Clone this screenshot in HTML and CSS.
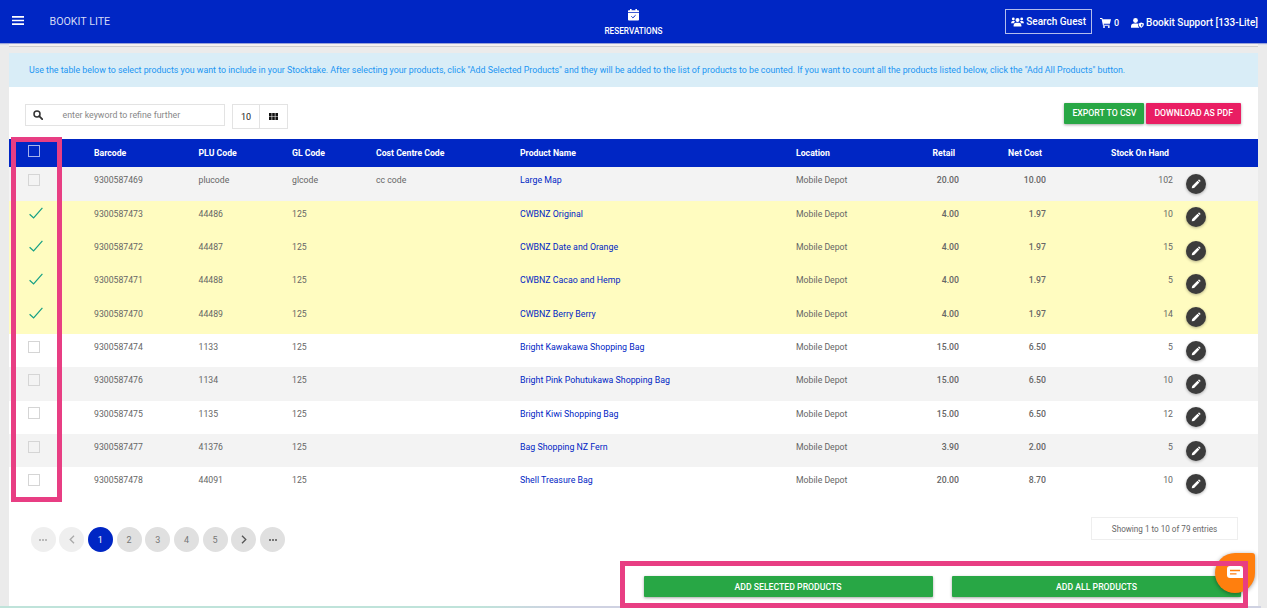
FILE: index.html
```
<!doctype html>
<html lang="en">
<head>
    <meta charset="UTF-8">
    <meta name="viewport" content="width=device-width, initial-scale=1.0">
    <title>Bookit Lite - Stocktake</title>
    <link rel="stylesheet" href="styles.css">
</head>
<body>
    <svg class="sprite">
        <symbol id="pencil" viewBox="0 0 12 12"><path d="M1.700 10.300l.5-2.300 5.300-5.300 1.900 1.900L4.100 9.900zM7.900 2.300l.6-.6q.5-.4 1 0l.8.8q.5.5 0 1l-.6.6z" fill="#fff"/></symbol>
        <symbol id="tick" viewBox="0 0 14 12"><path d="M.6 7.200l4 3.800L13.400.8" fill="none" stroke="#16a085" stroke-width="1.200"/></symbol>
    </svg>

    <div class="header">
        <div class="header-left">
            <svg class="burger" width="12" height="9" viewBox="0 0 12 9"><path d="M0 .9h12M0 4.500h12M0 8.100h12" stroke="#fff" stroke-width="1.600"/></svg>
            <div class="brand">BOOKIT LITE</div>
        </div>
        <div class="header-nav">
            <svg width="11" height="12" viewBox="0 0 11 12"><path d="M2 0h1.600v1.300h3.800V0H9v1.300h1.200q.8 0 .8.800v1.200H0V2.100q0-.8.8-.8H2z" fill="#fff"/><path d="M0 4h11v6.500q0 .9-.9.900H.9q-.9 0-.9-.9z" fill="#fff"/><path d="M3.400 7.300l1.500 1.500 2.700-2.600" fill="none" stroke="#0026c4" stroke-width="1"/></svg>
            <span>RESERVATIONS</span>
        </div>
        <div class="header-right">
            <div class="guest">
                <svg width="13" height="10" viewBox="0 0 13 10"><g fill="#fff"><circle cx="2.300" cy="1.900" r="1.400"/><circle cx="10.700" cy="1.900" r="1.400"/><circle cx="6.500" cy="3" r="2"/><path d="M0 6.300q0-2.500 2.300-2.500 1.200 0 1.700.8-.8.700-1 1.700zM13 6.300q0-2.500-2.300-2.500-1.200 0-1.700.8.8.700 1 1.700zM2.600 9.500V8.300q0-2.500 2.300-2.500h3.200q2.300 0 2.300 2.500v1.200z"/></g></svg>
                <span>Search Guest</span>
            </div>
            <div class="cart">
                <svg width="11" height="10" viewBox="0 0 11 10"><path d="M0 0h2.300l.3 1.200H11L9.900 5.800H3.700l.2.900h5.700v1H3L1.600 1H0z" fill="#fff"/><circle cx="4" cy="8.900" r="1" fill="#fff"/><circle cx="8.800" cy="8.900" r="1" fill="#fff"/></svg>
                <span>0</span>
            </div>
            <div class="user">
                <svg width="13" height="10" viewBox="0 0 13 10"><g fill="#fff"><circle cx="4.500" cy="2.500" r="2.400"/><path d="M0 9.800V8.500q0-3 3-3h2.900q.7 0 1.200.3-.5 2.300 1.300 4z"/><path d="M10.200 4.600l2.700 1q.2 3.200-2.700 4.400-2.900-1.200-2.700-4.400z"/></g><path d="M10.200 6v2.700q1.300-.8 1.400-2.200z" fill="#0026c4"/></svg>
                <span>Bookit Support [133-Lite]</span>
            </div>
        </div>
    </div>

    <div class="strip"></div>

    <div class="main">
        <div class="info"><span>Use the table below to select products you want to include in your Stocktake. After selecting your products, click "Add Selected Products" and they will be added to the list of products to be counted. If you want to count all the products listed below, click the "Add All Products" button.</span></div>

        <div class="toolbar">
            <div class="search">
                <svg width="10" height="10" viewBox="0 0 10 10"><circle cx="4" cy="4" r="3" fill="none" stroke="#333" stroke-width="1.500"/><path d="M6.200 6.200l3 3" stroke="#333" stroke-width="1.800" stroke-linecap="round"/></svg>
                <span>enter keyword to refine further</span>
            </div>
            <div class="view">
                <div class="view-count">10</div>
                <div class="view-grid"><svg width="9" height="7" viewBox="0 0 9 7"><path d="M0 0h2.600v3.200H0zM3.200 0h2.600v3.200H3.200zM6.400 0H9v3.200H6.400zM0 3.800h2.600V7H0zM3.200 3.800h2.600V7H3.200zM6.400 3.800H9V7H6.400z" fill="#111"/></svg></div>
            </div>
            <div class="export">
                <div class="btn green">EXPORT TO CSV</div>
                <div class="btn pink">DOWNLOAD AS PDF</div>
            </div>
        </div>

        <div class="table">
            <div class="row head">
                <div class="check"><i class="box"></i></div><div>Barcode</div><div>PLU Code</div><div>GL Code</div><div>Cost Centre Code</div><div>Product Name</div><div>Location</div><div class="num">Retail</div><div class="num">Net Cost</div><div class="num">Stock On Hand</div><div></div>
            </div>
            <div class="row odd">
                <div class="check"><i class="box"></i></div><div>9300587469</div><div>plucode</div><div>glcode</div><div>cc code</div><div class="name">Large Map</div><div class="loc">Mobile Depot</div><div class="num price">20.00</div><div class="num price">10.00</div><div class="num">102</div><div class="edit"><svg><use href="#pencil"/></svg></div>
            </div>
            <div class="row selected">
                <div class="check"><svg><use href="#tick"/></svg></div><div>9300587473</div><div>44486</div><div>125</div><div></div><div class="name">CWBNZ Original</div><div class="loc">Mobile Depot</div><div class="num price">4.00</div><div class="num price">1.97</div><div class="num">10</div><div class="edit"><svg><use href="#pencil"/></svg></div>
            </div>
            <div class="row selected">
                <div class="check"><svg><use href="#tick"/></svg></div><div>9300587472</div><div>44487</div><div>125</div><div></div><div class="name">CWBNZ Date and Orange</div><div class="loc">Mobile Depot</div><div class="num price">4.00</div><div class="num price">1.97</div><div class="num">15</div><div class="edit"><svg><use href="#pencil"/></svg></div>
            </div>
            <div class="row selected">
                <div class="check"><svg><use href="#tick"/></svg></div><div>9300587471</div><div>44488</div><div>125</div><div></div><div class="name">CWBNZ Cacao and Hemp</div><div class="loc">Mobile Depot</div><div class="num price">4.00</div><div class="num price">1.97</div><div class="num">5</div><div class="edit"><svg><use href="#pencil"/></svg></div>
            </div>
            <div class="row selected">
                <div class="check"><svg><use href="#tick"/></svg></div><div>9300587470</div><div>44489</div><div>125</div><div></div><div class="name">CWBNZ Berry Berry</div><div class="loc">Mobile Depot</div><div class="num price">4.00</div><div class="num price">1.97</div><div class="num">14</div><div class="edit"><svg><use href="#pencil"/></svg></div>
            </div>
            <div class="row">
                <div class="check"><i class="box"></i></div><div>9300587474</div><div>1133</div><div>125</div><div></div><div class="name">Bright Kawakawa Shopping Bag</div><div class="loc">Mobile Depot</div><div class="num price">15.00</div><div class="num price">6.50</div><div class="num">5</div><div class="edit"><svg><use href="#pencil"/></svg></div>
            </div>
            <div class="row odd">
                <div class="check"><i class="box"></i></div><div>9300587476</div><div>1134</div><div>125</div><div></div><div class="name">Bright Pink Pohutukawa Shopping Bag</div><div class="loc">Mobile Depot</div><div class="num price">15.00</div><div class="num price">6.50</div><div class="num">10</div><div class="edit"><svg><use href="#pencil"/></svg></div>
            </div>
            <div class="row">
                <div class="check"><i class="box"></i></div><div>9300587475</div><div>1135</div><div>125</div><div></div><div class="name">Bright Kiwi Shopping Bag</div><div class="loc">Mobile Depot</div><div class="num price">15.00</div><div class="num price">6.50</div><div class="num">12</div><div class="edit"><svg><use href="#pencil"/></svg></div>
            </div>
            <div class="row odd">
                <div class="check"><i class="box"></i></div><div>9300587477</div><div>41376</div><div>125</div><div></div><div class="name">Bag Shopping NZ Fern</div><div class="loc">Mobile Depot</div><div class="num price">3.90</div><div class="num price">2.00</div><div class="num">5</div><div class="edit"><svg><use href="#pencil"/></svg></div>
            </div>
            <div class="row">
                <div class="check"><i class="box"></i></div><div>9300587478</div><div>44091</div><div>125</div><div></div><div class="name">Shell Treasure Bag</div><div class="loc">Mobile Depot</div><div class="num price">20.00</div><div class="num price">8.70</div><div class="num">10</div><div class="edit"><svg><use href="#pencil"/></svg></div>
            </div>
        </div>

        <div class="table-foot">
            <div class="pages">
                <div class="page disabled"><svg width="8" height="2" viewBox="0 0 8 2"><path d="M0 0h2v2H0zM3 0h2v2H3zM6 0h2v2H6z" fill="#777"/></svg></div>
                <div class="page disabled"><svg width="6" height="9" viewBox="0 0 6 9"><path d="M5 .7L1.200 4.500 5 8.300" fill="none" stroke="#555" stroke-width="1.300"/></svg></div>
                <div class="page active">1</div>
                <div class="page">2</div>
                <div class="page">3</div>
                <div class="page">4</div>
                <div class="page">5</div>
                <div class="page"><svg width="6" height="9" viewBox="0 0 6 9"><path d="M1 .7l3.800 3.800L1 8.300" fill="none" stroke="#555" stroke-width="1.300"/></svg></div>
                <div class="page"><svg width="8" height="2" viewBox="0 0 8 2"><path d="M0 0h2v2H0zM3 0h2v2H3zM6 0h2v2H6z" fill="#777"/></svg></div>
            </div>
            <div class="entries">Showing 1 to 10 of 79 entries</div>
        </div>

        <div class="actions">
            <div class="btn green">ADD SELECTED PRODUCTS</div>
            <div class="btn green">ADD ALL PRODUCTS</div>
        </div>
    </div>
    <div class="bottom-line"></div>

    <div class="chat"><svg width="16" height="14" viewBox="0 0 16 14"><path d="M3 0h10q3 0 3 3v9H3q-3 0-3-3V3q0-3 3-3z" fill="#fff"/><path d="M3 4.500h10M3 7.800h6.500" stroke="#ff7f0e" stroke-width="1.300"/></svg></div>
    <div class="mark mark-checks"></div>
    <div class="mark mark-actions"></div>
</body>
</html>
```
FILE: styles.css
```
* {
    margin: 0;
    padding: 0;
    box-sizing: border-box;
}

body {
    height: 608px;
    overflow: hidden;
    background-color: #ebebeb;
    font-family: Roboto, "Liberation Sans", sans-serif;
    font-size: 8.7px;
    color: #666;
    white-space: nowrap;
}

svg {
    display: block;
}

.sprite {
    position: absolute;
    width: 0;
    height: 0;
}

.header {
    display: grid;
    grid-template-columns: 1fr auto 1fr;
    height: 43px;
    background-color: #0026c4;
    box-shadow: 0 1px 1px #99a3d8;
    color: #fff;
}

.header-left {
    display: flex;
    align-items: center;
    padding-left: 12px;
    gap: 25.5px;
}

.burger {
    margin-bottom: 2px;
}

.brand {
    font-size: 10.7px;
    color: #d3d9f5;
}

.header-nav {
    display: flex;
    flex-direction: column;
    align-items: center;
    gap: 4.5px;
    padding-top: 9px;
    font-size: 8.2px;
    font-weight: 500;
}

.header-right {
    display: flex;
    align-items: center;
    justify-content: flex-end;
    padding: 2px 9px 0 0;
    font-size: 10px;
    font-weight: 500;
}

.header-right > div {
    display: flex;
    align-items: center;
    gap: 2px;
}

.header-right .guest {
    height: 25px;
    margin: -2px 8px 0 0;
    padding: 0 5px;
    border: 1px solid #b3bdec;
}

.header-right .cart {
    gap: 3px;
    margin-right: 12px;
    font-size: 9px;
}

.strip {
    height: 3px;
    margin: 1px 9px 6px;
    background-color: #f3f0ee;
    border-bottom: 1px solid #ccc;
}

.main {
    height: 553px;
    margin: 0 9px;
    background-color: #fff;
}

.info {
    display: flex;
    align-items: center;
    height: 34px;
    padding-left: 20px;
    background-color: #d9edf7;
    color: #2196f3;
    font-size: 8.82px;
}

.toolbar {
    display: flex;
    align-items: flex-start;
    height: 52px;
    padding: 16px 17px 0 16px;
}

.search {
    display: flex;
    align-items: center;
    gap: 19.5px;
    width: 200px;
    height: 22px;
    margin-top: 1px;
    padding-left: 7px;
    border: 1px solid #e3e3e3;
    color: #888;
    font-size: 8.8px;
}

.view {
    display: flex;
    margin: 1px 0 0 7px;
    height: 25px;
    width: 56px;
    border: 1px solid #e3e3e3;
    color: #222;
    font-size: 9px;
}

.view div {
    display: flex;
    align-items: center;
    justify-content: center;
}

.view-count {
    width: 26px;
}

.view-grid {
    flex: 1;
    border-left: 1px solid #e3e3e3;
}

.export {
    display: flex;
    gap: 2px;
    margin-left: auto;
}

.btn {
    display: flex;
    align-items: center;
    justify-content: center;
    height: 21px;
    border-radius: 1px;
    box-shadow: 0 1px 3px rgba(0, 0, 0, .35);
    color: #fff;
    font-weight: 500;
}

.export .btn {
    padding: 0 8px 1px;
}

.green {
    background-color: #28a745;
}

.pink {
    background-color: #e91e63;
}

.table {
    height: 362px;
}

.row {
    display: grid;
    grid-template-columns: 85px 104.5px 93.5px 84px 144px 276px 104px 59px 87px 127px 85px;
    height: 33.33px;
    padding-top: 8px;
}

.row.head {
    height: 28.3px;
    padding-top: 9px;
    background-color: #0026c4;
    color: #fff;
    font-weight: 700;
}

.odd {
    background-color: #f3f3f3;
}

.selected {
    background-color: #fffcc0;
}

.num {
    text-align: right;
}

.head .num {
    padding-right: 4px;
}

.price {
    font-weight: 500;
}

.name {
    color: #0026c4;
    font-size: 8.82px;
}

.check {
    padding-left: 19px;
}

.check svg {
    width: 14px;
    height: 12px;
    margin: -2px 0 0 .5px;
}

.box {
    display: block;
    width: 12px;
    height: 12px;
    margin-top: -1.400px;
    border: 1px solid #d5d5d5;
}

.head .box {
    margin-top: -3px;
    border-color: #a6b2ec;
}

.edit {
    display: flex;
    align-items: center;
    justify-content: center;
    width: 20px;
    height: 20px;
    margin: -1.300px 0 0 13.400px;
    border-radius: 50%;
    background-color: #3c3c3c;
    box-shadow: 0 1px 3px rgba(0, 0, 0, .3);
}

.edit svg {
    width: 12px;
    height: 12px;
}

.table-foot {
    display: flex;
    align-items: flex-start;
    justify-content: space-between;
    height: 75px;
    padding: 16px 20px 0 21.500px;
}

.pages {
    display: flex;
    gap: 3.700px;
    margin-top: 10px;
}

.page {
    display: flex;
    align-items: center;
    justify-content: center;
    width: 25px;
    height: 25px;
    border-radius: 50%;
    background-color: #e0e0e0;
    color: #777;
    font-size: 9px;
}

.page.active {
    background-color: #0026c4;
    color: #fff;
}

.page.disabled {
    opacity: .5;
}

.entries {
    display: flex;
    align-items: center;
    justify-content: center;
    width: 147px;
    height: 23px;
    border: 1px solid #eee;
    font-size: 8.150px;
}

.actions {
    display: grid;
    grid-template-columns: 289px 289px;
    gap: 19.500px;
    padding-left: 634.500px;
}

.bottom-line {
    height: 2px;
    margin-right: 6px;
    background: linear-gradient(to right, #bfe3da 480px, #cfd2e2 560px);
}

.chat {
    position: absolute;
    left: 1215px;
    top: 553px;
    display: flex;
    align-items: center;
    justify-content: center;
    width: 40px;
    height: 40px;
    border-radius: 20px 3px 20px 20px;
    background-color: #ff7f0e;
    box-shadow: 0 1px 4px rgba(0, 0, 0, .4);
}

.mark {
    position: absolute;
    border: 5px solid #e83e83;
}

.mark-checks {
    left: 11px;
    top: 137px;
    width: 51px;
    height: 365px;
}

.mark-actions {
    left: 620px;
    top: 561px;
    width: 628px;
    height: 47px;
}
```
